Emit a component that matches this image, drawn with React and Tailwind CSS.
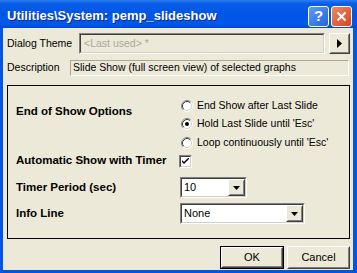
import React from "react";

function Sunken({ className = "", inner = "", children }) {
  return (
    <div className={"border border-t-[#808080] border-l-[#808080] border-b-white border-r-white " + className}>
      <div className={"h-full w-full border border-t-[#404040] border-l-[#404040] border-b-[#d4d0c8] border-r-[#d4d0c8] " + inner}>
        {children}
      </div>
    </div>
  );
}

function Raised({ className = "", children }) {
  return (
    <div className={"border border-t-white border-l-white border-b-[#404040] border-r-[#404040] bg-[#ece9d8] " + className}>
      <div className="h-full w-full border border-t-[#ece9d8] border-l-[#ece9d8] border-b-[#808080] border-r-[#808080] flex items-center justify-center">
        {children}
      </div>
    </div>
  );
}

function Radio({ checked }) {
  return (
    <svg width="12" height="12" viewBox="0 0 12 12" className="shrink-0">
      <circle cx="6" cy="6" r="5" fill="#fff" />
      <path d="M2.11 9.89 A5.5 5.5 0 0 1 9.89 2.11" stroke="#808080" fill="none" />
      <path d="M9.89 2.11 A5.5 5.5 0 0 1 2.11 9.89" stroke="#fff" fill="none" />
      <path d="M2.82 9.18 A4.5 4.5 0 0 1 9.18 2.82" stroke="#404040" fill="none" />
      <path d="M9.18 2.82 A4.5 4.5 0 0 1 2.82 9.18" stroke="#d4d0c8" fill="none" />
      {checked && <circle cx="6" cy="6" r="2" fill="#000" />}
    </svg>
  );
}

function Combo({ width, value }) {
  return (
    <Sunken className={width + " h-[21px]"} inner="bg-white flex items-center">
      <span className="flex-1 pl-[2px] text-[11px] text-black">{value}</span>
      <Raised className="w-[17px] h-[17px]">
        <svg width="7" height="4" viewBox="0 0 7 4">
          <path d="M0 0 H7 L3.5 4 Z" fill="#000" />
        </svg>
      </Raised>
    </Sunken>
  );
}

export default function App() {
  return (
    <div className="w-[357px] h-[273px] bg-[#0055e5] flex flex-col font-['Liberation_Sans',Arial,sans-serif] text-[10.5px] text-black">
      {/* title bar */}
      <div className="h-[28px] flex items-center pl-[7px] pr-[5px] pt-[4px] bg-[linear-gradient(to_bottom,#2f7ef0_0%,#0a5ee8_12%,#0055e5_50%,#0058ea_85%,#0048d4_100%)]">
        <span className="flex-1 text-white font-bold text-[13px] [text-shadow:1px_1px_#0c2a8a]">
          Utilities\System: pemp_slideshow
        </span>
        <div className="flex gap-[2px]">
          <div className="w-[21px] h-[21px] rounded-[3px] border border-white bg-[linear-gradient(135deg,#5f9bfb,#2462e0)] flex items-center justify-center text-white font-bold text-[15px]">
            ?
          </div>
          <div className="w-[21px] h-[21px] rounded-[3px] border border-white bg-[linear-gradient(135deg,#eb8a64,#d6441e)] flex items-center justify-center">
            <svg width="11" height="11" viewBox="0 0 11 11">
              <path d="M1.5 1.5 L9.5 9.5 M9.5 1.5 L1.5 9.5" stroke="#fff" strokeWidth="2" />
            </svg>
          </div>
        </div>
      </div>

      {/* body */}
      <div className="h-[242px] ml-[3px] mr-[4px] bg-[#ece9d8] pl-[4px] pr-[3px] pt-[5px] flex flex-col">
        <div className="flex items-center h-[21px]">
          <span className="w-[72px]">Dialog Theme</span>
          <Sunken className="w-[246px] h-[21px]" inner="flex items-center pl-[3px] text-[#aca899]">
            {"<Last used> *"}
          </Sunken>
          <Raised className="ml-[4px] w-[21px] h-[21px]">
            <svg width="5" height="9" viewBox="0 0 5 9">
              <path d="M0 0 L5 4.5 L0 9 Z" fill="#000" />
            </svg>
          </Raised>
        </div>

        <div className="flex items-center h-[16px] mt-[6px]">
          <span className="w-[63px]">Description</span>
          <div className="w-[279px] h-[16px] border border-t-[#aca899] border-l-[#aca899] border-b-white border-r-white flex items-center pl-[2px]">
            Slide Show (full screen view) of selected graphs
          </div>
        </div>

        {/* group */}
        <div className="mt-[9px] w-[343px] h-[154px] border border-black pl-[8px] pt-[11px] flex flex-col">
          <div className="flex">
            <span className="w-[164px] pt-[6px] font-bold text-[11.5px]">End of Show Options</span>
            <div className="flex flex-col pl-[1px]">
              <div className="h-[18px] flex items-center gap-[4px]">
                <Radio />
                <span>End Show after Last Slide</span>
              </div>
              <div className="h-[18px] flex items-center gap-[4px]">
                <Radio checked />
                <span>Hold Last Slide until 'Esc'</span>
              </div>
              <div className="h-[19px] flex items-center gap-[4px]">
                <Radio />
                <span>Loop continuously until 'Esc'</span>
              </div>
            </div>
          </div>

          <div className="flex items-center h-[18px]">
            <span className="w-[163px] font-bold text-[11.5px]">Automatic Show with Timer</span>
            <Sunken className="w-[13px] h-[13px]" inner="bg-white flex items-center justify-center">
              <svg width="7" height="7" viewBox="0 0 7 7">
                <path d="M0 2 L0 4 L2 6 L7 1 L7 -1 L2 4 Z" fill="#000" />
              </svg>
            </Sunken>
          </div>

          <div className="flex items-center h-[21px] mt-[7px]">
            <span className="w-[164px] font-bold text-[11.5px]">Timer Period (sec)</span>
            <Combo width="w-[67px]" value="10" />
          </div>

          <div className="flex items-center h-[21px] mt-[5px]">
            <span className="w-[164px] font-bold text-[11.5px]">Info Line</span>
            <Combo width="w-[125px]" value="None" />
          </div>
        </div>

        <div className="mt-[7px] flex justify-end gap-[3px]">
          <div className="w-[64px] h-[23px] border border-black">
            <Raised className="w-full h-full">
              <span className="text-[11px]">OK</span>
            </Raised>
          </div>
          <Raised className="w-[63px] h-[23px]">
            <span className="text-[11px]">Cancel</span>
          </Raised>
        </div>
      </div>
    </div>
  );
}
